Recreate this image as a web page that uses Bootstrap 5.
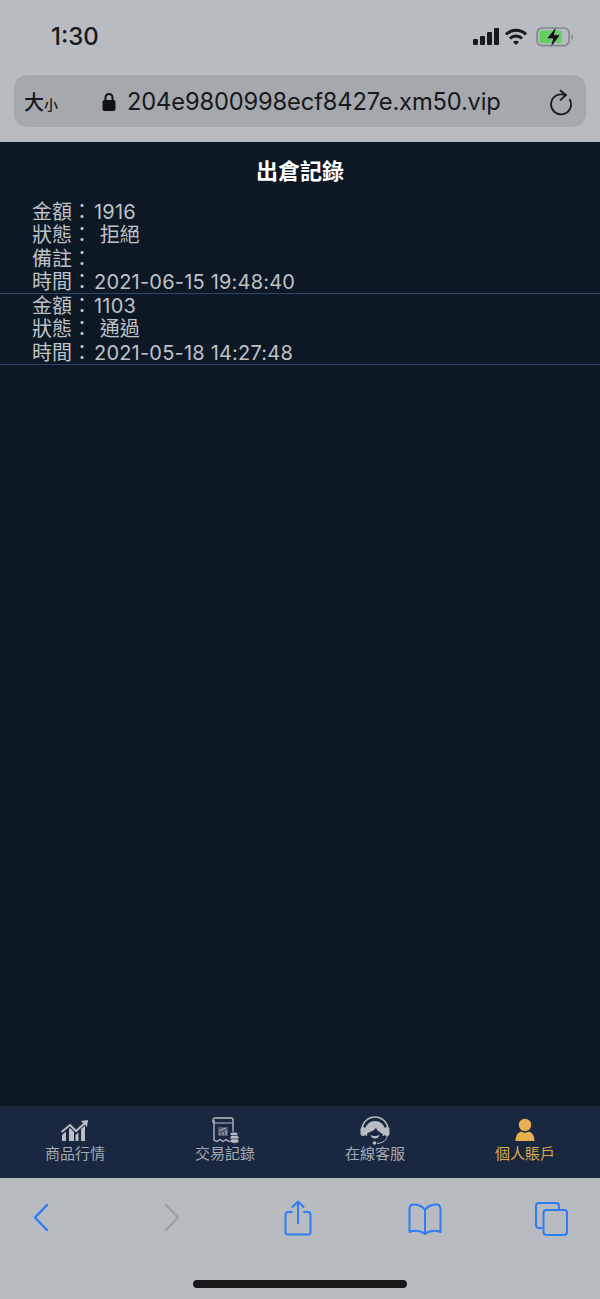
<!DOCTYPE html>
<html lang="zh-Hant">
<head>
  <meta charset="UTF-8">
  <title>出倉記錄</title>
  <meta name="viewport" content="width=device-width, initial-scale=1">
  <link href="https://cdn.jsdelivr.net/npm/bootstrap@5.3.0/dist/css/bootstrap.min.css" rel="stylesheet">
  <style>
    html, body { height: 100%; }
    body { background: #0d1825; font-family: Inter, "Noto Sans CJK TC", sans-serif; overflow: hidden; }
    .phone-shell { height: 1299px; }
    .safari-top { height: 142px; background: #b8bcc0; padding: 0 14px 15px; }
    .status-row { height: 75px; padding: 0 10px 2px 37px; }
    .clock { font-size: 24px; font-weight: 500; color: #17191c; }
    .addr-bar { height: 52px; background: #a5a8ad; border-radius: 13px; padding: 1px 12px 0 10px; color: #17191c; }
    .text-size { font-size: 20px; width: 77px; font-weight: 500; font-family: "Noto Sans CJK TC", sans-serif; }
    .text-size small { font-size: 14px; }
    .url-text { font-size: 23.7px; letter-spacing: -.15px; margin-left: 10px; }
    .page-title { font-size: 22px; font-weight: 700; color: #fff; height: 58px; padding-top: 14px; line-height: 30px; }
    .record-item { color: #bfc2c6; font-size: 20px; line-height: 23.3px; padding: 1px 0 0 32px; border-bottom: 1px solid #2e4769; }
    .record-item div:last-child { margin-bottom: -1px; }
    .rec-val { margin-left: 2px; letter-spacing: .2px; }
    .tab-bar { height: 72px; background: #1a2740; }
    .tab-cell { color: #a4a9b3; font-size: 15px; line-height: 18px; height: 72px; padding-top: 10px; }
    .tab-cell svg { display: block; height: 29px; }
    .tab-on { color: #dcaa4a; }
    .safari-bottom { height: 121px; background: #b8bcc0; }
    .tool-row { height: 80px; padding: 22px 0 0 32px; }
    .tool-fwd { margin-left: 110px; padding-top: 3px; }
    .tool-share { margin-left: 102px; }
    .tool-book { margin-left: 96px; padding-top: 3px; }
    .tool-tabs { margin-left: 93px; padding-top: 2px; }
    .tool-back { padding-top: 3px; }
    .home-bar { width: 214px; height: 8px; background: #161719; border-radius: 4px; margin: 22px auto 0; }
  </style>
</head>
<body>
  <div class="phone-shell d-flex flex-column">
    <div class="safari-top">
      <div class="status-row d-flex align-items-center justify-content-between">
        <div class="clock">1:30</div>
        <div class="d-flex align-items-center gap-1">
          <svg width="28" height="18" viewBox="0 0 28 18" fill="#17191c">
            <rect x="1" y="11" width="5" height="6" rx="1"/><rect x="8" y="8" width="5" height="9" rx="1"/><rect x="15" y="4" width="5" height="13" rx="1"/><rect x="22" y="0" width="5" height="17" rx="1"/>
          </svg>
          <svg width="24" height="18" viewBox="0 0 24 18" fill="none" stroke="#17191c" stroke-width="3">
            <path d="M2 6.500a14 14 0 0 1 20 0"/><path d="M6 10.500a8.500 8.500 0 0 1 12 0"/><path d="M12 17l-3-3a4 4 0 0 1 6 0z" fill="#17191c" stroke="none"/>
          </svg>
          <svg class="ms-1" width="40" height="22" viewBox="0 0 36 20">
            <rect x=".8" y="1.800" width="29" height="16" rx="4.500" fill="none" stroke="#85888b" stroke-width="1.500"/>
            <rect x="3" y="4" width="20" height="11.500" rx="2" fill="#5fd160"/>
            <path d="M32 7.500c2 .5 2 4.500 0 5z" fill="#85888b"/>
            <path d="M18.500 0 9.500 11.500h5.500l-2 8.500 9-12h-5.500z" fill="#111" stroke="#b8bcc0" stroke-width=".6"/>
          </svg>
        </div>
      </div>
      <div class="addr-bar d-flex align-items-center">
        <div class="text-size">大<small>小</small></div>
        <svg width="16" height="20" viewBox="0 0 16 20" fill="#111" class="flex-shrink-0">
          <path d="M3.500 8V5.500a4.500 4.500 0 0 1 9 0V8h-2V5.500a2.500 2.500 0 0 0-5 0V8z"/><rect x="1.500" y="8" width="13" height="11" rx="2"/>
        </svg>
        <div class="url-text flex-grow-1">204e9800998ecf8427e.xm50.vip</div>
        <svg width="24" height="28" viewBox="0 0 24 28" fill="none" stroke="#17191c" stroke-width="1.800">
          <path d="M15.500 7.400A10 10 0 1 0 19.500 11"/><path d="M10 2.300 16 7l-6 5.300"/>
        </svg>
      </div>
    </div>

    <div class="flex-grow-1 d-flex flex-column">
      <h1 class="page-title text-center mb-0">出倉記錄</h1>
      <div>
        <div class="record-item">
          <div>金額：<span class="rec-val">1916</span></div>
          <div>狀態： <span class="rec-val">拒絕</span></div>
          <div>備註：</div>
          <div>時間：<span class="rec-val">2021-06-15 19:48:40</span></div>
        </div>
        <div class="record-item">
          <div>金額：<span class="rec-val">1103</span></div>
          <div>狀態： <span class="rec-val">通過</span></div>
          <div>時間：<span class="rec-val">2021-05-18 14:27:48</span></div>
        </div>
      </div>
    </div>

    <div class="tab-bar row g-0 flex-shrink-0">
      <div class="col-3 tab-cell text-center">
        <svg class="mx-auto" width="30" height="29" viewBox="0 0 30 29" fill="#b9bdc4">
          <path d="M2 25v-6l4-3.500V25zM9 25V13l1-1 4 4v9zM15.500 25v-6l3-2.500V25zM21 25V13l4-3.500V25z"/>
          <path d="M1.500 16 10 9l6 6 9.500-8.500" fill="none" stroke="#b9bdc4" stroke-width="2"/>
          <path d="M21 5l7-1-1 7z"/>
        </svg>
        <div>商品行情</div>
      </div>
      <div class="col-3 tab-cell text-center">
        <svg class="mx-auto" width="30" height="29" viewBox="0 0 30 29" fill="none" stroke="#b9bdc4" stroke-width="1.300">
          <path d="M3 7V4a2 2 0 0 1 2-2h16a2 2 0 0 1 2 2v12"/>
          <path d="M4 4v20l3 1.500 3-2 3 2 3-2 3 2 2-1"/>
          <path d="M4 7h19" stroke-width="1"/>
          <rect x="8" y="11" width="10" height="9" fill="#4c5668" stroke="none"/>
          <path d="M10 19v-2M13 19v-3M16 19v-5M9 15l4-2 3-1" stroke-width="1"/>
          <ellipse cx="24" cy="18" rx="4" ry="2" fill="#b9bdc4" stroke="#1a2740" stroke-width=".7"/>
          <ellipse cx="24.500" cy="21.500" rx="4.500" ry="2.200" fill="#b9bdc4" stroke="#1a2740" stroke-width=".7"/>
          <ellipse cx="24.500" cy="25" rx="4.500" ry="2.200" fill="#b9bdc4" stroke="#1a2740" stroke-width=".7"/>
        </svg>
        <div>交易記錄</div>
      </div>
      <div class="col-3 tab-cell text-center">
        <svg class="mx-auto" width="32" height="29" viewBox="0 0 32 29">
          <path d="M3 18V14a13 13 0 0 1 26 0v4" fill="none" stroke="#b9bdc4" stroke-width="1.600"/>
          <rect x="1.500" y="11" width="5" height="9" rx="2.500" fill="#b9bdc4"/>
          <rect x="25.500" y="11" width="5" height="9" rx="2.500" fill="#b9bdc4"/>
          <path d="M5.500 16a10.500 11 0 0 1 21 0c0 2-1 3.500-2 4H7.500c-1-.5-2-2-2-4z" fill="#b9bdc4"/>
          <path d="M8 19c0-3 4-3 7-5 1-1 2-2.500 2-2.500 .5 3 3 4 7 7-1 4-4 6-8 6s-7-2-8-5.500z" fill="#1a2740"/>
          <path d="M11.500 18.500c2 2 6.500 2 9 0-.5 2.500-2 4-4.500 4s-4-1.500-4.500-4z" fill="#b9bdc4"/>
          <path d="M28 20c0 4-4 7-10 7.500" fill="none" stroke="#b9bdc4" stroke-width="1"/>
          <circle cx="15.500" cy="27" r="1.800" fill="#b9bdc4"/>
        </svg>
        <div>在線客服</div>
      </div>
      <div class="col-3 tab-cell text-center tab-on">
        <svg class="mx-auto" width="22" height="29" viewBox="0 0 22 29" fill="#e6b04e">
          <circle cx="11" cy="9" r="6.200"/>
          <path d="M1.500 25c0-5.500 2.500-8.500 5.500-9.500 2.500 1.500 5.500 1.500 8 0 3 1 5.500 4 5.500 9.500z"/>
        </svg>
        <div>個人賬戶</div>
      </div>
    </div>

    <div class="safari-bottom flex-shrink-0">
      <div class="tool-row d-flex align-items-start">
        <div class="tool-back">
          <svg class="d-block" width="20" height="30" viewBox="0 0 20 30" fill="none" stroke="#2f7cf6" stroke-width="2.500" stroke-linecap="round" stroke-linejoin="round"><path d="M15 2 3 14.500 15 27"/></svg>
        </div>
        <div class="tool-fwd">
          <svg class="d-block" width="20" height="30" viewBox="0 0 20 30" fill="none" stroke="#9da0a4" stroke-width="2.500" stroke-linecap="round" stroke-linejoin="round"><path d="M4 2l12 12.500L4 27"/></svg>
        </div>
        <div class="tool-share">
          <svg class="d-block" width="28" height="36" viewBox="0 0 28 36" fill="none" stroke="#2f7cf6" stroke-width="2" stroke-linecap="round" stroke-linejoin="round"><path d="M8 12H4a2.500 2.500 0 0 0-2.500 2.500V32A2.500 2.500 0 0 0 4 34.500h20a2.500 2.500 0 0 0 2.500-2.500V14.500A2.500 2.500 0 0 0 24 12h-4"/><path d="M14 23V2M8.500 7 14 1.500 19.500 7"/></svg>
        </div>
        <div class="tool-book">
          <svg class="d-block" width="34" height="32" viewBox="0 0 34 32" fill="none" stroke="#2f7cf6" stroke-width="2" stroke-linejoin="round"><path d="M17 7C14 2 7 1 3 2L1.500 5v24c5-2 12-1.500 15.500 2 3.500-3.500 10.500-4 15.500-2V5L31 2c-4-1-11 0-14 5zM17 7v24"/></svg>
        </div>
        <div class="tool-tabs">
          <svg class="d-block" width="34" height="34" viewBox="0 0 34 34" fill="none" stroke="#2f7cf6" stroke-width="2"><path d="M7 26H4a3 3 0 0 1-3-3V4a3 3 0 0 1 3-3h17a3 3 0 0 1 3 3v3"/><rect x="8.500" y="8" width="23.500" height="25" rx="3"/></svg>
        </div>
      </div>
      <div class="home-bar"></div>
    </div>
  </div>
  <script src="https://cdn.jsdelivr.net/npm/bootstrap@5.3.0/dist/js/bootstrap.bundle.min.js"></script>
</body>
</html>
